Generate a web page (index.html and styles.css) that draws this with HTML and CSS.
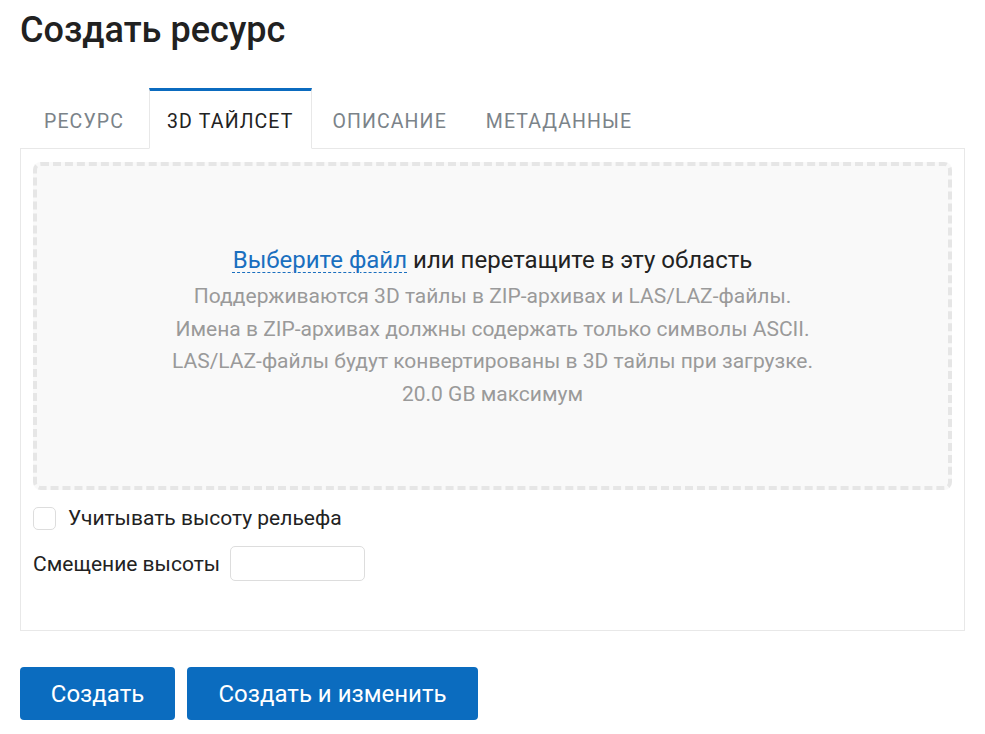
FILE: index.html
```html
<!DOCTYPE html>
<html lang="ru">
<head>
<meta charset="utf-8">
<link rel="stylesheet" href="styles.css">
</head>
<body>
<div class="page">
  <h1 class="title">Создать ресурс</h1>
  <div class="tabs">
    <div class="tab">Ресурс</div>
    <div class="tab active">3D тайлсет</div>
    <div class="tab">Описание</div>
    <div class="tab">Метаданные</div>
  </div>
  <div class="panel">
    <div class="dropzone">
      <div class="dz-main"><a class="link">Выберите файл</a> или перетащите в эту область</div>
      <div class="dz-hint">Поддерживаются 3D тайлы в ZIP-архивах и LAS/LAZ-файлы.</div>
      <div class="dz-hint">Имена в ZIP-архивах должны содержать только символы ASCII.</div>
      <div class="dz-hint">LAS/LAZ-файлы будут конвертированы в 3D тайлы при загрузке.</div>
      <div class="dz-hint">20.0 GB максимум</div>
    </div>
    <label class="check-row"><span class="checkbox"></span><span>Учитывать высоту рельефа</span></label>
    <div class="field-row"><span>Смещение высоты</span><span class="input"></span></div>
  </div>
  <div class="actions">
    <button class="btn btn-narrow">Создать</button>
    <button class="btn btn-wide">Создать и изменить</button>
  </div>
</div>
</body>
</html>
```
FILE: styles.css
```css
* { box-sizing: border-box; }
html, body { margin: 0; padding: 0; background: #fff; }
body { font-family: Roboto, "Noto Sans", sans-serif; color: #222; }
.page { padding: 0 20px; }
.title {
  margin: 0;
  padding-top: 8px;
  font-size: 36px;
  font-weight: 500;
  line-height: 44px;
  color: #212121;
}
.tabs {
  display: flex;
  margin-top: 36px;
  padding-left: 4px;
}
.tab {
  display: flex;
  align-items: center;
  padding: 4px 18px 0 19px;
  height: 61px;
  font-size: 19.5px;
  font-weight: 400;
  letter-spacing: 1.1px;
  text-transform: uppercase;
  color: #7b8389;
  border: 1px solid transparent;
  border-top: 3px solid transparent;
  margin-bottom: -1px;
}
.tab.active {
  color: #222;
  border-color: #e8e8e8;
  border-top-color: #0b6bbf;
  border-bottom-color: #fff;
  background: #fff;
  position: relative;
  z-index: 1;
  padding-left: 17px;
  padding-right: 18px;
  margin-left: 6px;
}
.panel {
  border: 1px solid #e8e8e8;
  padding: 13px 12px 49px;
}
.dropzone {
  height: 328px;
  border: 4px dashed #e6e6e6;
  border-radius: 8px;
  background: #f9f9f9;
  display: flex;
  flex-direction: column;
  align-items: center;
  justify-content: center;
}
.dz-main {
  font-size: 24px;
  line-height: 36px;
  color: #222;
  margin-bottom: 2px;
}
.link {
  color: #1a6fbf;
  text-decoration: underline dashed;
  text-decoration-thickness: 1px;
  text-underline-offset: 4px;
}
.dz-hint {
  font-size: 21px;
  line-height: 32.5px;
  color: #9a9a9a;
}
.check-row {
  display: flex;
  align-items: center;
  gap: 12px;
  margin-top: 16px;
  font-size: 21px;
  line-height: 24px;
  color: #222;
}
.checkbox {
  width: 23px;
  height: 23px;
  border: 1px solid #ddd;
  border-radius: 5px;
  background: #fff;
}
.field-row {
  display: flex;
  align-items: center;
  gap: 10px;
  margin-top: 16px;
  font-size: 21px;
  color: #222;
}
.input {
  width: 135px;
  height: 35px;
  border: 1px solid #ddd;
  border-radius: 5px;
  background: #fff;
}
.actions {
  display: flex;
  gap: 12px;
  margin-top: 36px;
}
.btn {
  height: 53px;
  border: none;
  border-radius: 4px;
  background: #0b6cbf;
  color: #fff;
  font-family: Roboto, "Noto Sans", sans-serif;
  font-size: 24px;
  padding: 0;
}
.btn-narrow { width: 155px; }
.btn-wide { width: 291px; }
```
